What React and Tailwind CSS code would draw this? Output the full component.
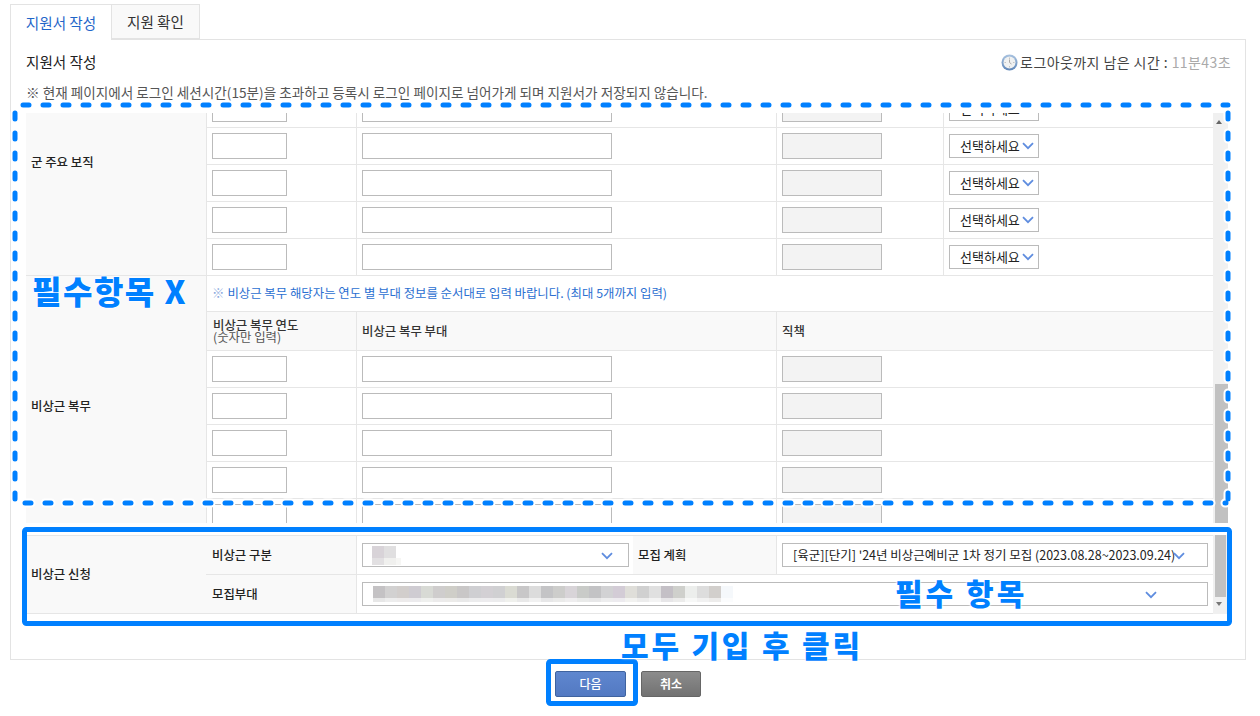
import React from 'react';

const BLUR_ROW = [
  '#c4c2c4', '#d2d1d1', '#d2cecc', '#cfccd2', '#d8dad5', '#cfcdcd', '#cfcec8', '#c9c7c7', '#cfcfd2', '#d3d0d4',
  '#d0d0d2', '#dadbd3', '#c8c7c8', '#dcdcdc', '#c4c4c6', '#cdcdcb', '#d8d4d8', '#c9cbc8', '#c3c3c5', '#d2d2d4',
  '#d3ccd6', '#dfded9', '#d0d0d0', '#e0e0e0', '#c4c0c6', '#cfd0cc', '#eceeec', '#dddddd', '#d2cfcc', '#f5f8fb',
];

function Chevron({ className = '' }) {
  return (
    <svg width="12" height="8" viewBox="0 0 12 8" fill="none" className={className}>
      <path d="M1 1.2 L6 6.2 L11 1.2" stroke="#5f8ddf" strokeWidth="1.8" />
    </svg>
  );
}

function Field({ className = '' }) {
  return <input readOnly className={`h-[26px] border border-[#bbbbbb] bg-white ${className}`} />;
}

function Sel({ className = '', children }) {
  return (
    <div className={`flex items-center border border-[#bbbbbb] bg-white ${className}`}>
      {children}
    </div>
  );
}

function Row({ withSelect }) {
  return (
    <div className="grid grid-cols-[150px_420px_167px_269px] h-[37px] border-b border-[#e6e6e6]">
      <div className="pl-[5px] pt-[5px] border-r border-[#e6e6e6]"><Field className="w-[75px]" /></div>
      <div className="pl-[5px] pt-[5px] border-r border-[#e6e6e6]"><Field className="w-[250px]" /></div>
      <div className={`pl-[5px] pt-[5px] ${withSelect ? 'border-r border-[#e6e6e6]' : ''}`}><Field className="w-[100px] !bg-[#f3f3f3]" /></div>
      {withSelect && (
        <div className="pl-[5px] pt-[6px]">
          <Sel className="w-[90px] h-[24px] pl-[10px] text-[13px] text-[#222]">
            <span className="w-[62px] shrink-0 whitespace-nowrap">선택하세요</span>
            <Chevron />
          </Sel>
        </div>
      )}
    </div>
  );
}

function ClockIcon() {
  return (
    <svg width="17" height="17" viewBox="0 0 17 17" className="mr-[2px]">
      <defs>
        <linearGradient id="clockRing" x1="0" y1="0" x2="0" y2="1">
          <stop offset="0" stopColor="#a9c3e0" />
          <stop offset="1" stopColor="#5f86b8" />
        </linearGradient>
      </defs>
      <circle cx="8.5" cy="8.5" r="8" fill="url(#clockRing)" />
      <circle cx="8.5" cy="8.5" r="6" fill="#f0f1f1" />
      <path d="M8.5 3.5 V5 M8.5 12 V13.5 M3.5 8.5 H5 M12 8.5 H13.5" stroke="#c4c4c4" strokeWidth="1" />
      <path d="M8.5 5.5 V8.5 L10.5 10" stroke="#a8a8a8" strokeWidth="1" fill="none" />
    </svg>
  );
}

function Overlay() {
  const dashed = 'M23 105 H1228 M15 113 V503 M25 503 H1226 M1228 113 V500';
  return (
    <svg width="1260" height="716" className="absolute left-0 top-0 pointer-events-none">
      <path d={dashed} fill="none" stroke="#ffffff" strokeWidth="9" strokeDasharray="6 14" strokeLinecap="round" />
      <path d={dashed} fill="none" stroke="#0080ff" strokeWidth="5" strokeDasharray="6 14" strokeLinecap="round" />
      <rect x="24.5" y="529.5" width="1205" height="94" rx="2" fill="none" stroke="#0080ff" strokeWidth="5" />
      <rect x="548.5" y="661.5" width="87" height="42" rx="2" fill="none" stroke="#0080ff" strokeWidth="5" />
    </svg>
  );
}

const HALO = '[text-shadow:0_0_2px_#fff,0_0_2px_#fff,0_0_3px_#fff]';

export default function App() {
  return (
    <div className="relative w-[1260px] h-[716px] overflow-hidden bg-white font-['Noto_Sans_CJK_KR',sans-serif] text-[12.4px] text-[#333]">
      <div className="pl-[10px] pr-[14px] pt-[4px]">
        {/* Tabs */}
        <div className="flex h-[36px] relative z-10 -mb-px">
          <div className="w-[102px] h-[36px] border border-b-0 border-[#e3e3e3] bg-white flex items-center justify-center text-[14.6px] text-[#1f66c9]">지원서 작성</div>
          <div className="w-[88px] h-[35px] border border-l-0 border-[#e3e3e3] bg-[#f9f9f9] flex items-center justify-center text-[14.6px] text-[#333]">지원 확인</div>
        </div>

        {/* Panel */}
        <div className="h-[621px] border border-[#e3e3e3] pl-[15px] pr-[17px]">
          <div className="flex items-center justify-between h-[43px] pt-[1px]">
            <span className="text-[14.6px] text-[#222]">지원서 작성</span>
            <span className="flex items-center text-[14px] tracking-[0.42px] text-[#444] -mr-[3px]">
              <ClockIcon />
              로그아웃까지 남은 시간 :&nbsp;<span className="text-[#aaaaaa]">11분43초</span>
            </span>
          </div>
          <p className="h-[30px] text-[13.6px] leading-[19px] text-[#555] whitespace-nowrap">
            ※ 현재 페이지에서 로그인 세션시간(15분)을 초과하고 등록시 로그인 페이지로 넘어가게 되며 지원서가 저장되지 않습니다.
          </p>

          {/* Scrolled form */}
          <div className="flex h-[410px] overflow-hidden">
            <div className="w-[1187px] -mt-[63px] shrink-0">
              <div className="flex border-b-0">
                <div className="w-[181px] flex items-center pl-[5px] bg-[#f9f9f9] border-r border-b border-[#e6e6e6] font-medium text-[#222]">군 주요 보직</div>
                <div className="flex-1">
                  <div className="h-[41px] border-b border-[#e6e6e6]" />
                  {[0, 1, 2, 3, 4].map((i) => <Row key={i} withSelect />)}
                </div>
              </div>
              <div className="flex">
                <div className="w-[181px] flex items-center pl-[5px] bg-[#f9f9f9] border-r border-[#e6e6e6] font-medium text-[#222]">비상근 복무</div>
                <div className="flex-1">
                  <div className="h-[36px] flex items-center pl-[5px] border-b border-[#e6e6e6] text-[12.4px] text-[#2b6fd1] whitespace-nowrap">
                    <span className="text-[#8aa8dd] mr-[3px]">※</span>비상근 복무 해당자는 연도 별 부대 정보를 순서대로 입력 바랍니다. (최대 5개까지 입력)
                  </div>
                  <div className="grid grid-cols-[150px_420px_436px] h-[39px] border-b border-[#e6e6e6] bg-[#f9f9f9] font-medium text-[#333]">
                    <div className="pl-[6px] flex flex-col justify-center leading-[12px] border-r border-[#e6e6e6]">
                      <span>비상근 복무 연도</span>
                      <span className="font-normal text-[#555]">(숫자만 입력)</span>
                    </div>
                    <div className="pl-[5px] flex items-center border-r border-[#e6e6e6]">비상근 복무 부대</div>
                    <div className="pl-[5px] flex items-center">직책</div>
                  </div>
                  {[0, 1, 2, 3, 4].map((i) => <Row key={i} />)}
                </div>
              </div>
            </div>
            <div className="relative w-[15px] shrink-0 bg-[#f0f0f0]">
              <div className="absolute left-[3px] top-[7px] w-0 h-0 border-x-[3px] border-x-transparent border-b-[4px] border-b-[#666]" />
              <div className="absolute left-[2px] right-0 top-[271px] bottom-0 bg-[#c1c1c1]" />
            </div>
          </div>

          {/* Required section */}
          <div className="flex mt-[12px]">
            <div className="w-[1187px] shrink-0 border-t border-[#e6e6e6]">
              <div className="flex">
                <div className="w-[180px] flex items-center pl-[5px] bg-[#f9f9f9] border-b border-[#e6e6e6] font-medium text-[#222]">비상근 신청</div>
                <div className="flex-1">
                  <div className="flex h-[39px] border-b border-[#e6e6e6]">
                    <div className="w-[151px] flex items-center pl-[6px] bg-[#f9f9f9] border-r border-[#e6e6e6] font-medium text-[#222]">비상근 구분</div>
                    <div className="w-[276px] pl-[5px] pt-[7px]">
                      <Sel className="w-[267px] h-[24px] relative">
                        <span className="flex flex-col ml-[9px]">
                          <span className="flex"><i className="w-[12px] h-[12px] bg-[#d8d3d8]" /><i className="w-[12px] h-[12px] bg-[#e0dfe0]" /></span>
                          <span className="flex"><i className="w-[12px] h-[7px] bg-[#e2e0e2]" /><i className="w-[12px] h-[7px] bg-[#f0f0ee]" /><i className="w-[5px] h-[7px] bg-[#f6f6f4]" /></span>
                        </span>
                        <Chevron className="absolute left-[238px] top-[8px]" />
                      </Sel>
                    </div>
                    <div className="w-[144px] flex items-center pl-[5px] bg-[#f9f9f9] border-r border-[#e6e6e6] text-[#222] font-medium">모집 계획</div>
                    <div className="pl-[5px] pt-[7px]">
                      <Sel className="w-[426px] h-[24px] pl-[10px] relative text-[12.5px] text-[#222] whitespace-nowrap">
                        [육군][단기] '24년 비상근예비군 1차 정기 모집 (2023.08.28~2023.09.24)
                        <Chevron className="absolute left-[390px] top-[8px]" />
                      </Sel>
                    </div>
                  </div>
                  <div className="flex h-[39px] border-b border-[#e6e6e6]">
                    <div className="w-[151px] flex items-center pl-[6px] bg-[#f9f9f9] border-r border-[#e6e6e6] font-medium text-[#222]">모집부대</div>
                    <div className="pl-[5px] pt-[7px]">
                      <Sel className="w-[846px] h-[24px] relative">
                        <span className="flex flex-col ml-[10px]">
                          <span className="flex">
                            {BLUR_ROW.map((c, i) => <i key={i} className="w-[12px] h-[12px]" style={{ backgroundColor: c }} />)}
                          </span>
                          <span className="flex">
                            {BLUR_ROW.map((c, i) => <i key={i} className="w-[12px] h-[4px] opacity-40" style={{ backgroundColor: c }} />)}
                          </span>
                        </span>
                        <Chevron className="absolute left-[782px] top-[8px]" />
                      </Sel>
                    </div>
                  </div>
                </div>
              </div>
            </div>
            <div className="relative w-[14px] shrink-0 bg-[#f0f0f0]">
              <div className="absolute left-[2px] right-[1px] top-0 h-[62px] bg-[#c1c1c1]" />
              <div className="absolute left-[3px] top-[67px] w-0 h-0 border-x-[3px] border-x-transparent border-t-[4px] border-t-[#777]" />
            </div>
          </div>
        </div>

        {/* Buttons */}
        <div className="flex justify-center gap-[15px] mt-[11px]">
          <button className="w-[71px] h-[26px] rounded-[2px] border border-[#3f639f] bg-gradient-to-b from-[#5f87cf] to-[#5379c2] text-[12px] font-medium text-white">다음</button>
          <button className="w-[60px] h-[26px] rounded-[2px] border border-[#666] bg-gradient-to-b from-[#8c8c8c] to-[#727272] text-[12px] font-bold text-white">취소</button>
        </div>
      </div>

      <Overlay />

      {/* Annotations */}
      <span className={`absolute left-[32px] top-[268px] text-[32px] leading-[44px] font-black tracking-[1.5px] text-[#0080ff] whitespace-nowrap ${HALO}`}>필수항목 X</span>
      <span className={`absolute left-[895px] top-[572px] text-[30px] leading-[40px] font-black tracking-[3px] text-[#0080ff] whitespace-nowrap ${HALO}`}>필수 항목</span>
      <span className={`absolute left-[621px] top-[623px] text-[30px] leading-[42px] font-black tracking-[2.8px] text-[#0080ff] whitespace-nowrap ${HALO}`}>모두 기입 후 클릭</span>
    </div>
  );
}
